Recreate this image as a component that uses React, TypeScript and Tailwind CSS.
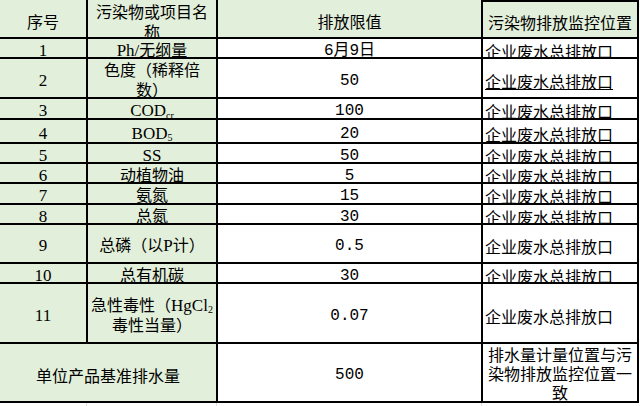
import React from "react";

const CJK = "font-['Noto_Sans_CJK_SC',sans-serif]";
const SERIF = "font-['Liberation_Serif','Noto_Sans_CJK_SC',serif]";
const MONO = "font-['Liberation_Mono','Noto_Sans_CJK_SC',monospace]";

const base =
  "flex items-center justify-center text-center whitespace-nowrap pt-[5px] leading-[20px] text-[16px] text-black";
const green = "bg-[#e2efda]";

type Row = { n: string; name: React.ReactNode; v: string; u: boolean };

const L = ({ children }: { children: React.ReactNode }) => <span className="text-[17px]">{children}</span>;

const rows: Row[] = [
  { n: "1", name: <><L>Ph/</L>无纲量</>, v: "6月9日", u: true },
  { n: "2", name: <>色度（稀释倍<br />数）</>, v: "50", u: true },
  { n: "3", name: <><L>COD</L><sub className="text-[10px]">cr</sub></>, v: "100", u: true },
  { n: "4", name: <><L>BOD</L><sub className="text-[10px]">5</sub></>, v: "20", u: true },
  { n: "5", name: <L>SS</L>, v: "50", u: true },
  { n: "6", name: <>动植物油</>, v: "5", u: true },
  { n: "7", name: <>氨氮</>, v: "15", u: true },
  { n: "8", name: <>总氮</>, v: "30", u: true },
  { n: "9", name: <>总磷（以<L>P</L>计）</>, v: "0.5", u: false },
  { n: "10", name: <>总有机碳</>, v: "30", u: true },
  {
    n: "11",
    name: <>急性毒性（<L>HgCl</L><sub className="text-[10px]">2</sub><br />毒性当量）</>,
    v: "0.07",
    u: false,
  },
];

export default function App() {
  return (
    <div className={`w-[640px] h-[406px] bg-white overflow-hidden ${CJK}`}>
      <div className="grid w-[639px] grid-cols-[86px_128px_263px_154px] grid-rows-[37px_18px_38px_19px_22px_18px_18px_19px_18px_37px_18px_58px_57px] gap-[2px] bg-black pr-[2px] pb-[2px]">
        {/* header */}
        <div className={`${base} ${green} ${CJK}`}>序号</div>
        <div className={`${base} ${green} ${CJK} leading-[18px]`}>
          污染物或项目名<br />称
        </div>
        <div className={`${base} ${green} ${CJK}`}>排放限值</div>
        <div className={`${base} ${green} ${CJK} border-t-2 border-black`}>污染物排放监控位置</div>

        {rows.map((r) => (
          <React.Fragment key={r.n}>
            <div className={`${base} ${green} ${SERIF} text-[17px]`}>{r.n}</div>
            <div className={`${base} ${green} ${SERIF}`}>
              <span>{r.name}</span>
            </div>
            <div className={`${base} bg-white ${MONO} text-[15px]`}>{r.v}</div>
            <div className={`${base} bg-white ${CJK} justify-start pl-[2px]`}>
              <span className={r.u ? "underline underline-offset-[1px]" : ""}>企业废水总排放口</span>
            </div>
          </React.Fragment>
        ))}

        {/* last row */}
        <div className={`${base} ${green} ${CJK} col-span-2`}>单位产品基准排水量</div>
        <div className={`${base} bg-white ${MONO} text-[15px]`}>500</div>
        <div className="flex items-start justify-center overflow-hidden bg-white pt-[1px] text-center whitespace-nowrap text-[16px] leading-[19px] text-black">
          <span>
            排水量计量位置与污<br />染物排放监控位置一<br />致
          </span>
        </div>
      </div>
      <div className="grid h-[4px] w-[640px] grid-cols-[87px_130px_265px_158px]">
        <div className="border-r border-[#dedede]" />
        <div className="border-r border-[#dedede]" />
        <div className="border-r border-[#dedede]" />
        <div />
      </div>
    </div>
  );
}
